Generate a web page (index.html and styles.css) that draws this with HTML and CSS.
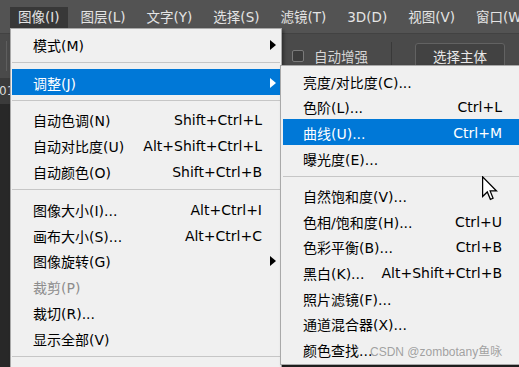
FILE: index.html
```html
<!DOCTYPE html>
<html lang="zh-CN">
<head>
    <meta charset="UTF-8">
    <title>图像 - 调整</title>
    <link rel="stylesheet" href="styles.css">
</head>
<body>
    <nav class="menubar">
        <span class="menubar-item active">图像(I)</span>
        <span class="menubar-item">图层(L)</span>
        <span class="menubar-item">文字(Y)</span>
        <span class="menubar-item">选择(S)</span>
        <span class="menubar-item">滤镜(T)</span>
        <span class="menubar-item">3D(D)</span>
        <span class="menubar-item">视图(V)</span>
        <span class="menubar-item">窗口(W)</span>
    </nav>

    <div class="optionsbar">
        <span class="grip"></span>
        <label class="check"><span class="check-box"></span>自动增强</label>
        <span class="vsep"></span>
        <button class="btn">选择主体</button>
    </div>

    <div class="tabbar"><span class="tab">01</span></div>
    <div class="workspace"></div>

    <ul class="menu image-menu">
        <li class="item"><span>模式(M)</span><span></span><span class="arrow"></span></li>
        <li class="sep"></li>
        <li class="item selected"><span>调整(J)</span><span></span><span class="arrow"></span></li>
        <li class="sep"></li>
        <li class="item"><span>自动色调(N)</span><span class="key">Shift+Ctrl+L</span><span></span></li>
        <li class="item"><span>自动对比度(U)</span><span class="key">Alt+Shift+Ctrl+L</span><span></span></li>
        <li class="item"><span>自动颜色(O)</span><span class="key">Shift+Ctrl+B</span><span></span></li>
        <li class="sep"></li>
        <li class="item"><span>图像大小(I)...</span><span class="key">Alt+Ctrl+I</span><span></span></li>
        <li class="item"><span>画布大小(S)...</span><span class="key">Alt+Ctrl+C</span><span></span></li>
        <li class="item"><span>图像旋转(G)</span><span></span><span class="arrow"></span></li>
        <li class="item disabled"><span>裁剪(P)</span><span></span><span></span></li>
        <li class="item"><span>裁切(R)...</span><span></span><span></span></li>
        <li class="item"><span>显示全部(V)</span><span></span><span></span></li>
        <li class="sep"></li>
        <li class="item"><span>复制(D)...</span><span></span><span></span></li>
    </ul>

    <ul class="menu adjust-menu">
        <li class="item"><span>亮度/对比度(C)...</span><span></span><span></span></li>
        <li class="item"><span>色阶(L)...</span><span class="key">Ctrl+L</span><span></span></li>
        <li class="item selected"><span>曲线(U)...</span><span class="key">Ctrl+M</span><span></span></li>
        <li class="item"><span>曝光度(E)...</span><span></span><span></span></li>
        <li class="sep"></li>
        <li class="item"><span>自然饱和度(V)...</span><span></span><span></span></li>
        <li class="item"><span>色相/饱和度(H)...</span><span class="key">Ctrl+U</span><span></span></li>
        <li class="item"><span>色彩平衡(B)...</span><span class="key">Ctrl+B</span><span></span></li>
        <li class="item"><span>黑白(K)...</span><span class="key">Alt+Shift+Ctrl+B</span><span></span></li>
        <li class="item"><span>照片滤镜(F)...</span><span></span><span></span></li>
        <li class="item"><span>通道混合器(X)...</span><span></span><span></span></li>
        <li class="item"><span>颜色查找...</span><span></span><span></span></li>
    </ul>

    <svg class="cursor" width="16" height="25" viewBox="0 0 13 20">
        <path d="M0.5 0.5 L0.5 16.5 L4.3 12.8 L6.8 18.8 L9 17.9 L6.6 12 L11.8 12 Z" fill="#fff" stroke="#000" stroke-width="1" stroke-linejoin="miter"/>
    </svg>

    <div class="watermark">CSDN @zombotany鱼咏</div>
</body>
</html>
```

FILE: styles.css
```css
* {
    box-sizing: border-box;
    margin: 0;
    padding: 0;
}

body {
    position: relative;
    width: 519px;
    height: 367px;
    overflow: hidden;
    background: #282828;
    font-family: "DejaVu Sans", "Noto Sans CJK SC", sans-serif;
    font-size: 14px;
}

/* top menu bar */
.menubar {
    display: flex;
    gap: 5px;
    height: 34px;
    padding: 7px 0 0 10px;
    background: #535353;
    border-bottom: 1px solid #424242;
    white-space: nowrap;
    font-size: 13.5px;
}

.menubar-item {
    height: 21px;
    line-height: 21px;
    padding: 0 8px;
    color: #e4e4e4;
}

.menubar-item.active {
    background: #383838;
}

/* tool options bar */
.optionsbar {
    display: flex;
    align-items: center;
    height: 44px;
    background: #4a4a4a;
    color: #d6d6d6;
    font-size: 13.5px;
}

.grip {
    width: 1px;
    height: 30px;
    margin: 0 285px 0 6px;
    background: #5e5e5e;
}

.check {
    display: flex;
    align-items: center;
    gap: 10px;
}

.check-box {
    width: 12px;
    height: 12px;
    border: 1px solid #7a7a7a;
    border-radius: 2px;
    background: #3c3c3c;
}

.vsep {
    width: 1px;
    height: 28px;
    margin: 0 23px 0 23px;
    background: #393939;
}

.btn {
    width: 90px;
    height: 26px;
    border: 1px solid #626262;
    border-radius: 3px;
    background: #424242;
    color: #e8e8e8;
    font: inherit;
}

.tabbar {
    height: 26px;
    background: #3b3b3b;
    color: #dcdcdc;
    line-height: 26px;
    font-size: 12px;
}

.tab {
    margin-left: -1px;
}

.workspace {
    height: 262px;
    background: #282828;
}

/* dropdown menus */
.menu {
    position: absolute;
    list-style: none;
    background: #f0f0f0;
    border: 1px solid #a9a9a9;
    padding: 2px 1px;
    box-shadow: 2px 2px 3px rgba(0, 0, 0, 0.35);
    color: #000;
}

.image-menu {
    left: 10px;
    top: 28px;
    width: 272px;
    z-index: 1;
}

.adjust-menu {
    left: 280px;
    top: 65px;
    width: 242px;
    padding: 2px;
    z-index: 2;
}

.item {
    display: grid;
    grid-template-columns: 1fr auto 18px;
    align-items: center;
    height: 25.6px;
    padding: 2px 0 0 21px;
    white-space: nowrap;
}

.image-menu .item {
    height: 25.8px;
}

.adjust-menu .item {
    padding-left: 20px;
    grid-template-columns: 1fr auto 17px;
}

.item.selected {
    background: #0078d7;
    color: #fff;
}

.item.disabled {
    color: #8d8d8d;
}

.arrow {
    justify-self: start;
    margin-left: 8px;
    width: 0;
    height: 0;
    border-left: 6px solid #000;
    border-top: 5px solid transparent;
    border-bottom: 5px solid transparent;
}

.selected .arrow {
    border-left-color: #fff;
}

.sep {
    height: 12px;
    display: flex;
    align-items: center;
}

.sep::before {
    content: "";
    flex: 1;
    height: 1px;
    background: #c6c6c6;
}

.cursor {
    position: absolute;
    left: 482px;
    top: 176px;
    z-index: 3;
}

.watermark {
    position: absolute;
    left: 370px;
    top: 342px;
    z-index: 3;
    font-family: "Liberation Sans", "Noto Sans CJK SC", sans-serif;
    font-size: 12px;
    color: rgba(140, 140, 140, 0.8);
}
```
